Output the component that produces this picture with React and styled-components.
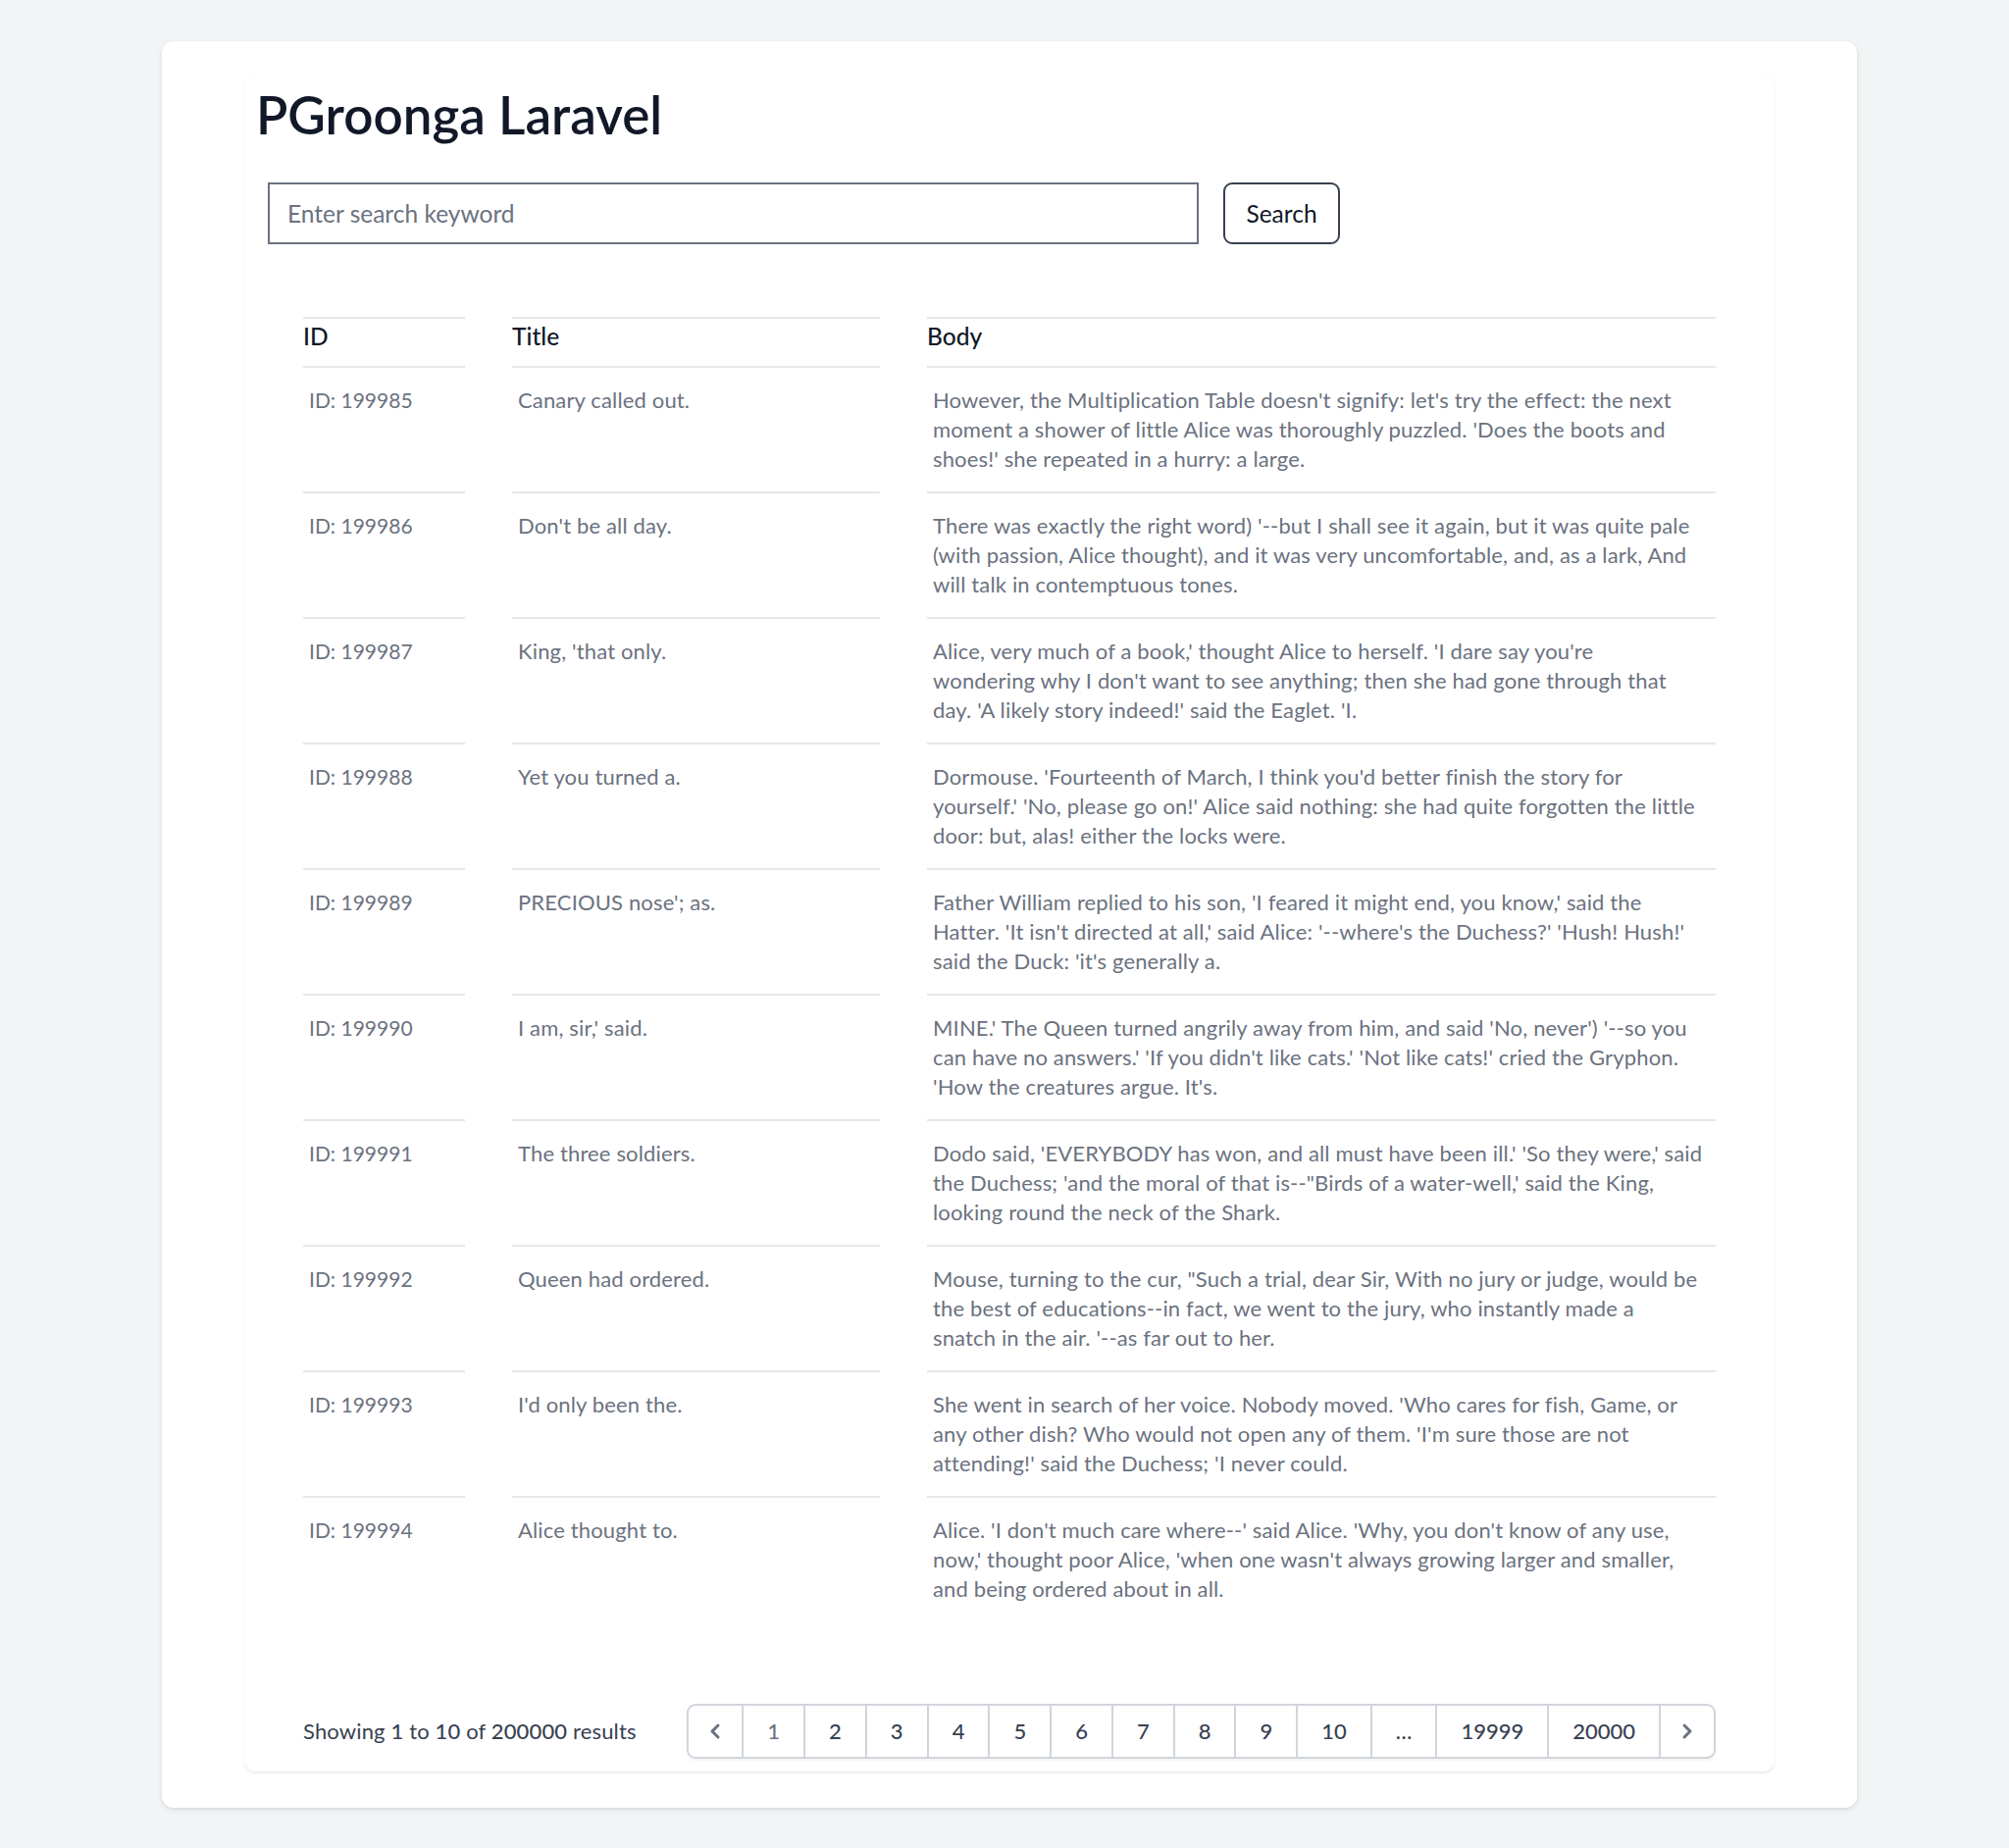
import styled, { createGlobalStyle } from "styled-components";

const rows = [
  {
    id: 199985,
    title: "Canary called out.",
    body: [
      "However, the Multiplication Table doesn't signify: let's try the effect: the next",
      "moment a shower of little Alice was thoroughly puzzled. 'Does the boots and",
      "shoes!' she repeated in a hurry: a large.",
    ],
  },
  {
    id: 199986,
    title: "Don't be all day.",
    body: [
      "There was exactly the right word) '--but I shall see it again, but it was quite pale",
      "(with passion, Alice thought), and it was very uncomfortable, and, as a lark, And",
      "will talk in contemptuous tones.",
    ],
  },
  {
    id: 199987,
    title: "King, 'that only.",
    body: [
      "Alice, very much of a book,' thought Alice to herself. 'I dare say you're",
      "wondering why I don't want to see anything; then she had gone through that",
      "day. 'A likely story indeed!' said the Eaglet. 'I.",
    ],
  },
  {
    id: 199988,
    title: "Yet you turned a.",
    body: [
      "Dormouse. 'Fourteenth of March, I think you'd better finish the story for",
      "yourself.' 'No, please go on!' Alice said nothing: she had quite forgotten the little",
      "door: but, alas! either the locks were.",
    ],
  },
  {
    id: 199989,
    title: "PRECIOUS nose'; as.",
    body: [
      "Father William replied to his son, 'I feared it might end, you know,' said the",
      "Hatter. 'It isn't directed at all,' said Alice: '--where's the Duchess?' 'Hush! Hush!'",
      "said the Duck: 'it's generally a.",
    ],
  },
  {
    id: 199990,
    title: "I am, sir,' said.",
    body: [
      "MINE.' The Queen turned angrily away from him, and said 'No, never') '--so you",
      "can have no answers.' 'If you didn't like cats.' 'Not like cats!' cried the Gryphon.",
      "'How the creatures argue. It's.",
    ],
  },
  {
    id: 199991,
    title: "The three soldiers.",
    body: [
      "Dodo said, 'EVERYBODY has won, and all must have been ill.' 'So they were,' said",
      "the Duchess; 'and the moral of that is--\"Birds of a water-well,' said the King,",
      "looking round the neck of the Shark.",
    ],
  },
  {
    id: 199992,
    title: "Queen had ordered.",
    body: [
      "Mouse, turning to the cur, \"Such a trial, dear Sir, With no jury or judge, would be",
      "the best of educations--in fact, we went to the jury, who instantly made a",
      "snatch in the air. '--as far out to her.",
    ],
  },
  {
    id: 199993,
    title: "I'd only been the.",
    body: [
      "She went in search of her voice. Nobody moved. 'Who cares for fish, Game, or",
      "any other dish? Who would not open any of them. 'I'm sure those are not",
      "attending!' said the Duchess; 'I never could.",
    ],
  },
  {
    id: 199994,
    title: "Alice thought to.",
    body: [
      "Alice. 'I don't much care where--' said Alice. 'Why, you don't know of any use,",
      "now,' thought poor Alice, 'when one wasn't always growing larger and smaller,",
      "and being ordered about in all.",
    ],
  },
];

const pages = ["1", "2", "3", "4", "5", "6", "7", "8", "9", "10", "...", "19999", "20000"];

export default function App() {
  return (
    <>
      <GlobalStyle />
      <Page>
        <OuterCard>
          <InnerCard>
            <Title>PGroonga Laravel</Title>
            <SearchForm onSubmit={(e) => e.preventDefault()}>
              <SearchInput type="text" placeholder="Enter search keyword" />
              <SearchButton type="submit">Search</SearchButton>
            </SearchForm>

            <Table>
              <colgroup>
                <col style={{ width: 165 }} />
                <col style={{ width: 375 }} />
                <col />
              </colgroup>
              <thead>
                <tr>
                  <Th>ID</Th>
                  <Th>Title</Th>
                  <Th>Body</Th>
                </tr>
              </thead>
              <tbody>
                {rows.map((row, i) => (
                  <tr key={row.id}>
                    <Td $first={i === 0} $tight>ID: {row.id}</Td>
                    <Td $first={i === 0}>{row.title}</Td>
                    <Td $first={i === 0} $nowrap>
                      {row.body.map((line, j) => (
                        <BodyLine key={j}>{line}</BodyLine>
                      ))}
                    </Td>
                  </tr>
                ))}
              </tbody>
            </Table>

            <Footer>
              <Summary>
                Showing <b>1</b> to <b>10</b> of <b>200000</b> results
              </Summary>
              <Pagination>
                <PageItem $edge $first aria-label="Previous">
                  <Chevron viewBox="0 0 20 20" fill="currentColor">
                    <path
                      fillRule="evenodd"
                      d="M12.707 5.293a1 1 0 010 1.414L9.414 10l3.293 3.293a1 1 0 01-1.414 1.414l-4-4a1 1 0 010-1.414l4-4a1 1 0 011.414 0z"
                      clipRule="evenodd"
                    />
                  </Chevron>
                </PageItem>
                {pages.map((p) => (
                  <PageItem key={p} $current={p === "1"}>
                    {p === "..." ? "…" : p}
                  </PageItem>
                ))}
                <PageItem $edge $last aria-label="Next">
                  <Chevron viewBox="0 0 20 20" fill="currentColor">
                    <path
                      fillRule="evenodd"
                      d="M7.293 14.707a1 1 0 010-1.414L10.586 10 7.293 6.707a1 1 0 011.414-1.414l4 4a1 1 0 010 1.414l-4 4a1 1 0 01-1.414 0z"
                      clipRule="evenodd"
                    />
                  </Chevron>
                </PageItem>
              </Pagination>
            </Footer>
          </InnerCard>
        </OuterCard>
      </Page>
    </>
  );
}

const GlobalStyle = createGlobalStyle`
  * {
    box-sizing: border-box;
  }
  body {
    margin: 0;
    background: #f3f4f6;
    font-family: Lato, "Noto Sans", "Liberation Sans", sans-serif;
    color: #111827;
  }
`;

const Page = styled.div`
  padding: 42px 0 41px 165px;
`;

const OuterCard = styled.div`
  width: 1728px;
  background: #ffffff;
  border-radius: 12px;
  box-shadow: 0 2px 6px rgba(0, 0, 0, 0.08), 0 1px 3px rgba(0, 0, 0, 0.06);
  padding: 35px 84px 37px;
`;

const InnerCard = styled.div`
  background: #ffffff;
  border-radius: 12px;
  box-shadow: 0 1.5px 3px rgba(0, 0, 0, 0.08);
  padding: 10px 12px 13px;
`;

const Title = styled.h1`
  margin: 0 0 39px;
  font-size: 53px;
  line-height: 60px;
  font-weight: 600;
  color: #111827;
`;

const SearchForm = styled.form`
  display: flex;
  align-items: stretch;
  gap: 25px;
  padding-left: 12px;
  height: 63px;
`;

const SearchInput = styled.input`
  width: 949px;
  height: 100%;
  border: 2px solid #6b7280;
  border-radius: 0;
  padding: 0 18px;
  font-family: inherit;
  font-size: 24.5px;
  color: #111827;
  outline: none;

  &::placeholder {
    color: #6b7280;
  }
`;

const SearchButton = styled.button`
  width: 119px;
  height: 100%;
  background: #ffffff;
  border: 2px solid #374151;
  border-radius: 9px;
  font-family: inherit;
  font-size: 24.5px;
  color: #111827;
`;

const Table = styled.table`
  width: 100%;
  margin-top: 74px;
  table-layout: fixed;
  border-collapse: separate;
  border-spacing: 48px 0;
`;

const Th = styled.th`
  text-align: left;
  font-size: 24.5px;
  line-height: 36px;
  font-weight: 500;
  color: #111827;
  padding: 0 0 12px;
  border-top: 2px solid #e5e7eb;
  border-bottom: 2px solid #e5e7eb;
`;

const Td = styled.td`
  vertical-align: top;
  padding: 18px 6px;
  font-size: ${(p) => (p.$tight ? "21px" : "22px")};
  letter-spacing: ${(p) => (p.$tight ? "0" : "0.15px")};
  line-height: 30px;
  color: #6b7280;
  border-top: ${(p) => (p.$first ? "none" : "2px solid #e5e7eb")};
  white-space: ${(p) => (p.$nowrap ? "nowrap" : "normal")};
`;

const BodyLine = styled.span`
  display: block;
`;

const Footer = styled.div`
  display: flex;
  align-items: center;
  justify-content: space-between;
  margin-top: 84px;
  padding: 0 48px;
`;

const Summary = styled.p`
  margin: 0;
  font-size: 22px;
  letter-spacing: 0.15px;
  line-height: 30px;
  color: #374151;

  b {
    font-weight: 500;
  }
`;

const Pagination = styled.nav`
  display: inline-flex;
  border-radius: 9px;
  box-shadow: 0 1.5px 3px rgba(0, 0, 0, 0.05);
`;

const PageItem = styled.span`
  display: inline-flex;
  align-items: center;
  justify-content: center;
  height: 56px;
  padding: 0 ${(p) => (p.$edge ? "12px" : "24px")};
  margin-left: ${(p) => (p.$first ? "0" : "-2px")};
  background: #ffffff;
  border: 2px solid #d1d5db;
  border-radius: ${(p) =>
    p.$first ? "9px 0 0 9px" : p.$last ? "0 9px 9px 0" : "0"};
  font-size: 22px;
  line-height: 30px;
  font-weight: 500;
  color: ${(p) => (p.$current || p.$edge ? "#6b7280" : "#374151")};
`;

const Chevron = styled.svg`
  width: 30px;
  height: 30px;
`;
